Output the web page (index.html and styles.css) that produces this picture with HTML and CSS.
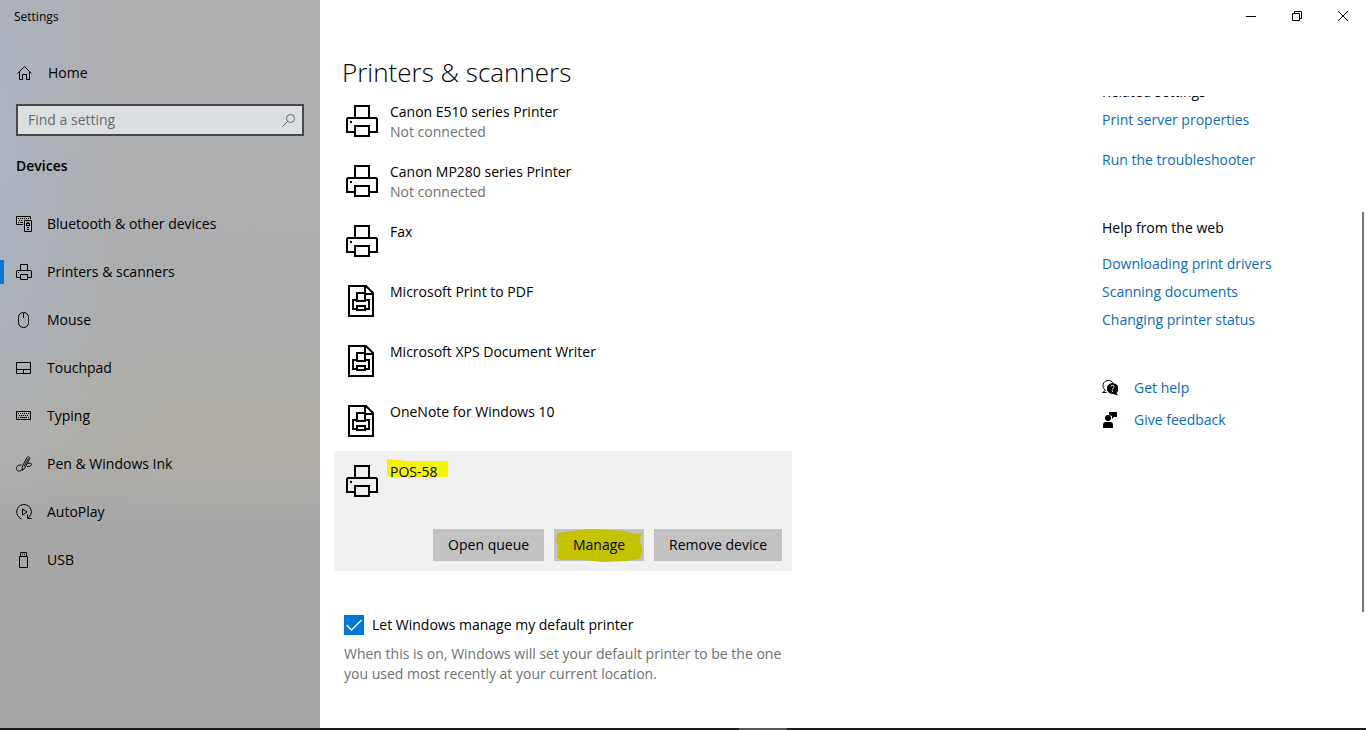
FILE: index.html
```html
<!DOCTYPE html>
<html lang="en">
<head>
<meta charset="utf-8">
<title>Settings</title>
<link rel="stylesheet" href="styles.css">
</head>
<body>
<svg class="defs" aria-hidden="true">
  <symbol id="printer" viewBox="0 0 32 32"><path d="M9 13V1h14v12M9 27H1V14l1-1h28l1 1v13h-8M9 21h14v10H9z" fill="none" stroke="currentColor" stroke-width="2"/><path d="M4 16h2v2H4z"/></symbol>
  <symbol id="document" viewBox="0 0 32 32"><g fill="none" stroke="currentColor" stroke-width="2"><path d="M3 1h17l7 7v23H3zM19 1v8h8"/><path d="M11 17V8h8v9M11 24H7v-9h3M20 15h3v9h-4M11 16h8M11 21h8v4h-8z"/></g></symbol>
</svg>
<div class="window">
  <aside class="sidebar">
    <div class="app-name">Settings</div>
    <a class="home" href="#"><svg class="icon" viewBox="0 0 16 16"><path d="M1.500 8.500 8.500 1.500l7 7M3.500 7v7.500h3v-5h4v5h3V7" fill="none" stroke="currentColor"/></svg>Home</a>
    <label class="search">
      <input type="text" placeholder="Find a setting" aria-label="Find a setting">
      <svg class="glass" viewBox="0 0 14 14"><g fill="none" stroke="currentColor"><circle cx="8.500" cy="5.500" r="4"/><path d="M5.500 8.500.5 13.500"/></g></svg>
    </label>
    <h2 class="section">Devices</h2>
    <nav class="nav">
      <a href="#"><svg class="icon" viewBox="0 0 16 16"><path d="M7 8.500H.5v-8h14V3M8.500 4.500h7v11h-7z" fill="none" stroke="currentColor"/><path d="M2 2h1v1H2zm2 0h1v1H4zm2 0h1v1H6zm2 0h1v1H8zm2 0h1v1h-1zm2 0h1v1h-1zM3 4h1v1H3zm2 0h1v1H5zM2 6h1v1H2zm2 0h3v1H4zM11 6h2v1h-2zm-1 1h4v3h-4zm1 4h2v1h-2zm0 2h2v1h-2z"/><path d="M11 8h2v1h-2z" class="paper"/></svg>Bluetooth &amp; other devices</a>
      <a href="#" class="current" aria-current="page"><svg class="icon"><use href="#printer"/></svg>Printers &amp; scanners</a>
      <a href="#"><svg class="icon" viewBox="0 0 16 16"><path d="M7.500.5c3 0 5 2 5 5v5c0 3-2 5-5 5s-5-2-5-5v-5c0-3 2-5 5-5zM7.500 1v5" fill="none" stroke="currentColor"/></svg>Mouse</a>
      <a href="#"><svg class="icon" viewBox="0 0 16 16"><path d="M.5 2.500h14v11H.5zM.5 9.500h14M7.500 9.500v4" fill="none" stroke="currentColor"/></svg>Touchpad</a>
      <a href="#"><svg class="icon" viewBox="0 0 16 16"><path d="M.5 3.500h14v8H.5z" fill="none" stroke="currentColor"/><path d="M2 5h1v1H2zm2 0h1v1H4zm2 0h1v1H6zm2 0h1v1H8zm2 0h1v1h-1zm2 0h1v1h-1zM3 7h1v1H3zm2 0h1v1H5zm2 0h1v1H7zm2 0h1v1H9zm2 0h1v1h-1zM2 9h1v1H2zm2 0h7v1H4zm8 0h1v1h-1z"/></svg>Typing</a>
      <a href="#"><svg class="icon" viewBox="0 0 16 16"><path d="M6 14.500 6.500 10 11 1.500c1-1.500 3.500-.5 2.500 1.500L9 12zM8 10.500l4.500-8M5.500 9C-1 8.500-1 15.500 3.500 15c1.500 0 2-1.500 2.500-2M12 7.500c3-1 4.500.5 3 2-1 1-2.500 1-4 1" fill="none" stroke="currentColor"/></svg>Pen &amp; Windows Ink</a>
      <a href="#"><svg class="icon" viewBox="0 0 16 16"><path d="M5.500 15C-1.500 12-.8 1.500 7.500.5c8-.3 10.500 9.500 4.500 13.500M11.500 10.500v4h4M6.500 5v6l4.500-3z" fill="none" stroke="currentColor"/></svg>AutoPlay</a>
      <a href="#"><svg class="icon" viewBox="0 0 16 16"><path d="M4.500 4.500v-4h6v4M3.500 4.500h8v11h-8zM6 2.500h1M8 2.500h1" fill="none" stroke="currentColor"/></svg>USB</a>
    </nav>
  </aside>
  <main class="main">
    <div class="caption">
      <button aria-label="Minimize"><svg viewBox="0 0 10 10"><path d="M0 5.500h10" fill="none" stroke="currentColor"/></svg></button>
      <button aria-label="Restore"><svg viewBox="0 0 10 10"><path d="M.5 2.500h7v7h-7zM2.500 2V.5h7v7H8" fill="none" stroke="currentColor"/></svg></button>
      <button aria-label="Close"><svg viewBox="0 0 10 10"><path d="m0 0 10 10M10 0 0 10" fill="none" stroke="currentColor"/></svg></button>
    </div>
    <h1 class="title">Printers &amp; scanners</h1>
    <div class="viewport">
      <section class="content">
        <ul class="devices">
          <li><svg class="device-icon"><use href="#printer"/></svg><div><p>Canon E510 series Printer</p><p class="muted">Not connected</p></div></li>
          <li><svg class="device-icon"><use href="#printer"/></svg><div><p>Canon MP280 series Printer</p><p class="muted">Not connected</p></div></li>
          <li><svg class="device-icon"><use href="#printer"/></svg><p>Fax</p></li>
          <li><svg class="device-icon"><use href="#document"/></svg><p>Microsoft Print to PDF</p></li>
          <li><svg class="device-icon"><use href="#document"/></svg><p>Microsoft XPS Document Writer</p></li>
          <li><svg class="device-icon"><use href="#document"/></svg><p>OneNote for Windows 10</p></li>
          <li class="selected">
            <svg class="device-icon"><use href="#printer"/></svg>
            <p class="marked"><svg class="marker name-marker" viewBox="0 0 61 20" preserveAspectRatio="none"><path d="M0 0 12 1l8 1h41v16H37l-12 1-11-1-8 1-6-2z"/></svg>POS-58</p>
            <div class="actions">
              <button>Open queue</button>
              <button class="marked"><svg class="marker button-marker" viewBox="0 0 90 34" preserveAspectRatio="none"><path d="M4 4 18 2 37 0l35 2 5 2 10 1-1 8 2 8-2 10-15 2-22 1-18-2H8l-5-2 1-11-2-8z"/></svg>Manage</button>
              <button>Remove device</button>
            </div>
          </li>
        </ul>
        <div class="default">
          <label class="check"><input type="checkbox" checked>Let Windows manage my default printer</label>
          <p class="muted">When this is on, Windows will set your default printer to be the one you used most recently at your current location.</p>
        </div>
      </section>
      <aside class="related">
        <h3>Related settings</h3>
        <div class="links spaced"><a href="#">Print server properties</a><a href="#">Run the troubleshooter</a></div>
        <h3>Help from the web</h3>
        <div class="links"><a href="#">Downloading print drivers</a><a href="#">Scanning documents</a><a href="#">Changing printer status</a></div>
        <div class="support">
          <a href="#"><svg class="icon" viewBox="0 0 16 16"><path d="M3.500 10.500C-1 6.500 1 1 6 .5c2.500 0 4 1 5 2.500M3.500 10.500.5 12.500h4" fill="none" stroke="currentColor"/><path d="M10.500 3c7 .5 7 8 4 10l1.500 2.500-5-1.500C3 14 3 3.500 10.500 3z"/><path d="M9 6.500c.5-2 3.500-1.500 3 .5-.3 1-1.500 1-1.500 2.500m0 1v1.300" fill="none" class="paper-line"/></svg>Get help</a>
          <a href="#"><svg class="icon" viewBox="0 0 16 16"><circle cx="6" cy="6" r="3"/><path d="M7 0h8v5h-3l-2 2V4L7 3zM1 16v-3c0-2 1-3 3-3h4c2 0 3 1 3 3v3z"/></svg>Give feedback</a>
        </div>
      </aside>
      <div class="scrollbar"></div>
    </div>
  </main>
</div>
<footer class="taskbar"><span></span></footer>
</body>
</html>
```

FILE: styles.css
```css
* { box-sizing: border-box; }
body {
  margin: 0;
  height: 100vh;
  display: flex;
  flex-direction: column;
  overflow: hidden;
  background: #fff;
  color: #000;
  font: 14px/20px "Open Sans", "Noto Sans", sans-serif;
}
h1, h2, h3, p, ul { margin: 0; padding: 0; font-size: 14px; font-weight: 400; }
a { color: inherit; text-decoration: none; }
button { border: 0; padding: 0; font: inherit; color: inherit; }
svg { fill: currentColor; flex: none; }
.defs { position: absolute; width: 0; height: 0; }
.window { flex: 1; display: flex; min-height: 0; }
.icon { width: 16px; height: 16px; }

.sidebar {
  width: 320px;
  flex: none;
  background:
    radial-gradient(ellipse 110px 420px at 0 20%, #abb5c2cc, #abb5c200),
    radial-gradient(ellipse 340px 110px at 75% 59%, #b1ada5, #b1ada500),
    linear-gradient(#afafb2, #acadaf 48%, #aeaeac 60%, #a6a6a7 72%, #a6a6a6);
}
.app-name { padding: 7px 14px 0; font-size: 12px; }
.home { display: flex; align-items: center; gap: 16px; margin-top: 36px; padding: 0 16px; }
.search {
  display: flex;
  align-items: center;
  height: 32px;
  margin: 21px 16px 0;
  padding: 0 6px 0 10px;
  border: 2px solid #46484a;
  background: #dcdfe2;
}
.search input { flex: 1; min-width: 0; border: 0; padding: 0; background: none; font: inherit; outline: 0; }
.search input::placeholder { color: #66686b; opacity: 1; }
.glass { width: 14px; height: 14px; color: #65676a; }
.section { margin: 20px 16px 0; font-weight: 600; }
.nav { margin-top: 24px; }
.nav a { display: flex; align-items: center; gap: 15px; height: 48px; padding: 0 16px; }
.nav .current { background: linear-gradient(#0078d7, #0078d7) left center / 4px 24px no-repeat; }
.paper { fill: #b0b0b2; }

.main { flex: 1; min-width: 0; display: flex; flex-direction: column; }
.caption { display: flex; justify-content: flex-end; height: 32px; }
.caption button { width: 46px; background: none; display: flex; align-items: center; justify-content: center; }
.caption svg { width: 10px; height: 10px; }
.title { padding: 24px 22px 8px; font-size: 26px; line-height: 32px; font-weight: 300; }
.viewport { flex: 1; min-height: 0; display: flex; overflow: hidden; }
.content { width: 458px; margin: -5px 0 0 14px; }
.devices { list-style: none; }
.devices li { display: flex; gap: 12px; height: 60px; padding: 11px 10px 10px 12px; }
.device-icon { width: 32px; height: 32px; margin-top: 3px; }
.muted { color: #707070; }
.devices .selected { flex-wrap: wrap; align-content: space-between; height: 120px; background: #f1f1f1; }
.marked { position: relative; isolation: isolate; }
.marker { position: absolute; z-index: -1; fill: #f4f400; }
.name-marker { left: -3px; top: -3px; width: 61px; height: 20px; }
.button-marker { left: 0; top: 0; width: 90px; height: 33px; fill: #c3c300; }
.actions { display: flex; justify-content: flex-end; gap: 10px; width: 100%; }
.actions button { min-width: 90px; height: 32px; padding: 0 15px; background: #c2c2c2; }
.default { padding: 44px 0 0 10px; }
.check { display: flex; gap: 8px; margin-bottom: 9px; }
.check input {
  appearance: none;
  width: 20px;
  height: 20px;
  margin: 0;
  background: #0078d7 url("data:image/svg+xml,%3Csvg xmlns='http://www.w3.org/2000/svg' viewBox='0 0 20 20'%3E%3Cpath d='m2.500 10 5 5L17.500 5' fill='none' stroke='white' stroke-width='1.300'/%3E%3C/svg%3E");
}
.related { width: 252px; margin: -14px 0 0 auto; }
.related a { color: #0a6cc0; }
.links { display: grid; justify-items: start; gap: 8px; margin: 16px 0 48px; }
.links.spaced { gap: 20px; margin: 8px 0 48px; }
.support { display: grid; gap: 12px; }
.support a { display: flex; align-items: center; gap: 16px; }
.support svg { color: #000; }
.paper-line { stroke: #fff; }
.scrollbar { width: 2px; height: 400px; margin: 116px 2px 0 8px; background: #767676; }
.taskbar { height: 2px; display: flex; justify-content: center; background: #1c1a1f; }
.taskbar span { width: 48px; margin-left: 160px; background: #555; }
```
